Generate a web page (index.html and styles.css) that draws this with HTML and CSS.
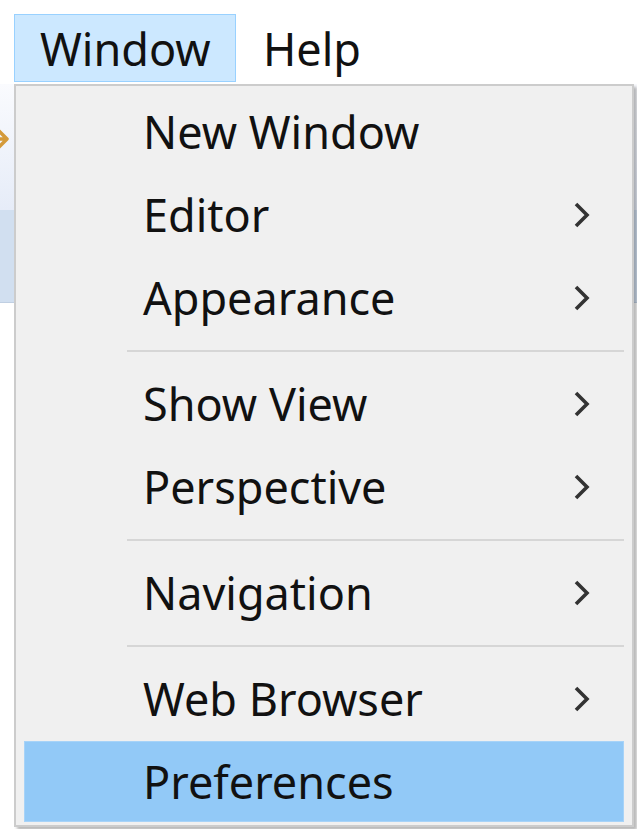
FILE: index.html
```html
<!DOCTYPE html>
<html>
<head>
<meta charset="utf-8">
<link rel="stylesheet" href="styles.css">
</head>
<body>
<div class="app">
  <div class="menubar">
    <div class="mb-item active">Window</div>
    <div class="mb-item">Help</div>
  </div>
  <div class="toolbar">
    <svg class="tool-icon" width="14" height="34" viewBox="0 0 14 34">
      <path d="M-8 17 L4 17 M-1 9 L7 17 L-1 25" fill="none" stroke="#d49a3a" stroke-width="3.5" stroke-linecap="round" stroke-linejoin="round"/>
    </svg>
  </div>
  <div class="band"></div>
  <div class="rest"></div>
</div>

<div class="dropdown">
  <div class="item"><span class="label">New Window</span></div>
  <div class="item"><span class="label">Editor</span><svg class="chev" width="20" height="28" viewBox="0 0 20 28"><path d="M4 3 L15 14 L4 25" fill="none" stroke="#333" stroke-width="3.6"/></svg></div>
  <div class="item"><span class="label">Appearance</span><svg class="chev" width="20" height="28" viewBox="0 0 20 28"><path d="M4 3 L15 14 L4 25" fill="none" stroke="#333" stroke-width="3.6"/></svg></div>
  <div class="sep"></div>
  <div class="item"><span class="label">Show View</span><svg class="chev" width="20" height="28" viewBox="0 0 20 28"><path d="M4 3 L15 14 L4 25" fill="none" stroke="#333" stroke-width="3.6"/></svg></div>
  <div class="item"><span class="label">Perspective</span><svg class="chev" width="20" height="28" viewBox="0 0 20 28"><path d="M4 3 L15 14 L4 25" fill="none" stroke="#333" stroke-width="3.6"/></svg></div>
  <div class="sep"></div>
  <div class="item"><span class="label">Navigation</span><svg class="chev" width="20" height="28" viewBox="0 0 20 28"><path d="M4 3 L15 14 L4 25" fill="none" stroke="#333" stroke-width="3.6"/></svg></div>
  <div class="sep"></div>
  <div class="item"><span class="label">Web Browser</span><svg class="chev" width="20" height="28" viewBox="0 0 20 28"><path d="M4 3 L15 14 L4 25" fill="none" stroke="#333" stroke-width="3.6"/></svg></div>
  <div class="item selected"><span class="label">Preferences</span></div>
</div>
</body>
</html>
```

FILE: styles.css
```css
html, body {
  margin: 0;
  padding: 0;
  background: #ffffff;
  width: 637px;
  height: 829px;
  overflow: hidden;
  font-family: "Noto Sans", "Open Sans", sans-serif;
  color: #111;
}

.app {
  display: flex;
  flex-direction: column;
  height: 829px;
}

.menubar {
  height: 84px;
  display: flex;
  align-items: flex-start;
  padding-top: 14px;
  padding-left: 14px;
  box-sizing: border-box;
}

.mb-item {
  height: 68px;
  box-sizing: border-box;
  padding: 0 25px 0 26px;
  display: flex;
  align-items: center;
  font-size: 45px;
  line-height: 1;
  border: 1px solid transparent;
}

.mb-item.active {
  background: #cce8ff;
  border-color: #99d1ff;
  width: 222px;
  padding-left: 25px;
}

.toolbar {
  height: 126px;
  background: linear-gradient(#fafbfe, #e6ecf8);
  display: flex;
  align-items: center;
}

.tool-icon {
  margin-top: -16px;
}

.band {
  height: 92px;
  background: #d1dff0;
  border-bottom: 1px solid #c0cfe2;
}

.rest {
  flex: 1;
  background: #ffffff;
}

.dropdown {
  position: absolute;
  left: 14px;
  top: 84px;
  width: 620px;
  height: 743px;
  box-sizing: border-box;
  background: #f0f0f0;
  border: 2px solid #cccccc;
  box-shadow: 3px 3px 3px rgba(0, 0, 0, 0.28);
  padding: 4px 8px 0 8px;
  display: flex;
  flex-direction: column;
}

.item {
  height: 83px;
  flex: none;
  display: flex;
  align-items: center;
  padding-left: 119px;
  padding-right: 32px;
  font-size: 45px;
  line-height: 1;
  box-sizing: border-box;
}

.item .label {
  flex: 1;
  position: relative;
  top: 0;
}

.item.selected {
  background: #92c9f7;
  border: 1px solid #a7d3f8;
  padding-left: 118px;
  height: 81px;
  margin-top: 1px;
}

.sep {
  height: 23px;
  flex: none;
  display: flex;
  align-items: center;
  padding-left: 103px;
}

.sep::after {
  content: "";
  display: block;
  height: 2px;
  flex: 1;
  background: #d6d6d6;
}
```
